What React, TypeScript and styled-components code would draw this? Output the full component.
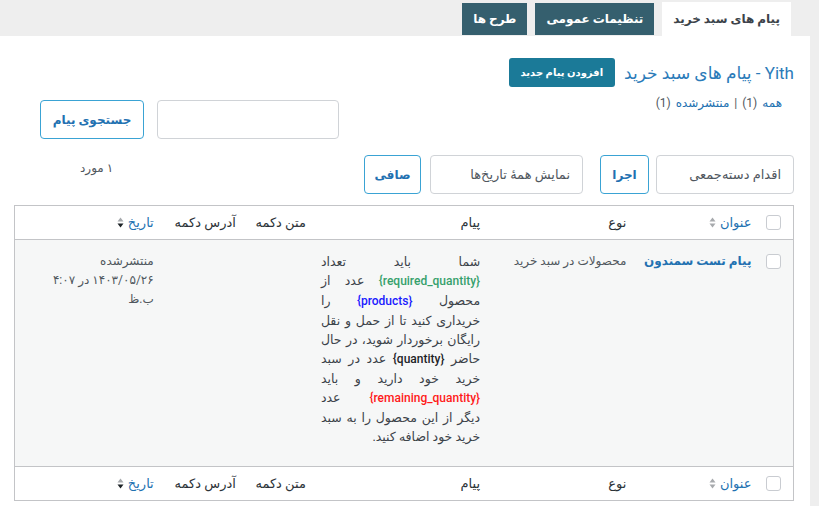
import React from 'react';
import styled, { createGlobalStyle } from 'styled-components';

const GlobalStyle = createGlobalStyle`
  html, body {
    margin: 0;
    padding: 0;
    background: #eeeeee;
  }
  body {
    font-family: Roboto, "DejaVu Sans", sans-serif;
    font-size: 13px;
    color: #3c434a;
  }
`;

const Page = styled.div`
  direction: rtl;
  width: 819px;
  height: 506px;
  overflow: hidden;
  background: #eeeeee;
`;

const TabBar = styled.div`
  display: flex;
  gap: 8px;
  height: 36px;
  padding: 2px 28px 0 0;
  box-sizing: border-box;
`;

const Tab = styled.div<{ $active?: boolean }>`
  display: flex;
  align-items: center;
  justify-content: center;
  height: ${p => (p.$active ? 34 : 32)}px;
  margin-top: ${p => (p.$active ? 0 : 1)}px;
  padding: 0 11px;
  box-sizing: border-box;
  font-size: 12px;
  font-weight: bold;
  background: ${p => (p.$active ? '#ffffff' : '#355f6e')};
  color: ${p => (p.$active ? '#3c434a' : '#ffffff')};
`;

const Panel = styled.div`
  background: #ffffff;
  margin-right: 9px;
  height: 470px;
  padding: 22px 16px 0 14px;
  box-sizing: border-box;
`;

const TitleRow = styled.div`
  display: flex;
  align-items: center;
  gap: 9px;
`;

const Title = styled.h1`
  margin: 0;
  font-size: 17px;
  font-weight: normal;
  color: #2b7bb9;
`;

const AddButton = styled.button`
  height: 29px;
  padding: 0 12px;
  border: none;
  border-radius: 3px;
  background: #1b7a98;
  color: #ffffff;
  font-family: inherit;
  font-size: 10px;
  font-weight: bold;
`;

const FilterRow = styled.div`
  display: flex;
  justify-content: space-between;
  align-items: flex-start;
  margin-top: 6px;
`;

const Views = styled.div`
  display: flex;
  align-items: center;
  gap: 5px;
  padding-right: 12px;
  padding-top: 3px;
  font-size: 12px;
  color: #50575e;
`;

const ViewLink = styled.a`
  color: #2271b1;
  text-decoration: none;
`;

const SearchBox = styled.div`
  display: flex;
  gap: 13px;
  margin-left: 26px;
  margin-top: 7px;
`;

const TextInput = styled.div`
  width: 182px;
  height: 39px;
  border: 1px solid #d0d3d7;
  border-radius: 4px;
  box-sizing: border-box;
`;

const OutlineButton = styled.button<{ $w: number }>`
  width: ${p => p.$w}px;
  height: 39px;
  border: 1px solid #3aa3d4;
  border-radius: 4px;
  background: #ffffff;
  color: #2271b1;
  font-family: inherit;
  font-size: 12px;
  font-weight: bold;
  box-sizing: border-box;
  padding: 0;
`;

const BulkRow = styled.div`
  display: flex;
  align-items: center;
  margin-top: 16px;
`;

const Select = styled.div<{ $w: number }>`
  display: flex;
  align-items: center;
  width: ${p => p.$w}px;
  height: 39px;
  padding: 0 12px 0 0;
  border: 1px solid #d0d3d7;
  border-radius: 4px;
  box-sizing: border-box;
  font-size: 13px;
  color: #50575e;
`;

const BulkGroup = styled.div<{ $gap: number; $start?: number }>`
  display: flex;
  gap: ${p => p.$gap}px;
  margin-right: ${p => p.$start || 0}px;
`;

const Count = styled.div`
  margin-right: auto;
  margin-left: 66px;
  align-self: flex-start;
  margin-top: 6px;
  font-size: 12px;
  color: #50575e;
`;

const Table = styled.table`
  margin-top: 11px;
  width: 780px;
  table-layout: fixed;
  border-collapse: collapse;
  border: 1px solid #c3c4c7;
`;

const Th = styled.th<{ $w: number }>`
  width: ${p => p.$w}px;
  box-sizing: border-box;
  height: 34px;
  padding: 0 8px;
  text-align: right;
  font-weight: normal;
  font-size: 13px;
  color: #2c3338;
  background: #ffffff;
  white-space: nowrap;
`;

const HeadRow = styled.tr<{ $foot?: boolean }>`
  border-${p => (p.$foot ? 'top' : 'bottom')}: 1px solid #c3c4c7;
`;

const BodyRow = styled.tr`
  background: #f6f7f7;
`;

const Td = styled.td`
  vertical-align: top;
  padding: 12px 8px;
  text-align: right;
  font-size: 12px;
  line-height: 19px;
  color: #50575e;
`;

const CheckCell = styled.td`
  vertical-align: top;
  padding: 14px 12px 0 0;
`;

const CheckTh = styled.th`
  width: 34px;
  box-sizing: border-box;
  padding: 0 12px 0 0;
  text-align: right;
  background: #ffffff;
`;

const Check = styled.span`
  display: block;
  width: 15px;
  height: 15px;
  border: 1px solid #c9ccd1;
  border-radius: 3px;
  background: #ffffff;
  box-sizing: border-box;
`;

const SortLink = styled.a`
  display: inline-flex;
  align-items: center;
  gap: 4px;
  color: #2271b1;
  text-decoration: none;
`;

const RowTitle = styled.a`
  font-weight: bold;
  font-size: 12px;
  color: #2271b1;
  text-decoration: none;
`;

const Message = styled(Td)`
  text-align: justify;
  text-align-last: right;
  padding: 12px 8px 20px 7px;
  font-size: 12.5px;
  color: #3c434a;
`;

const Token = styled.span<{ $c: string }>`
  color: ${p => p.$c};
  font-family: Roboto, sans-serif;
  font-size: 12px;
  font-weight: 500;
  unicode-bidi: isolate;
`;

const SortIcon = ({ desc }: { desc?: boolean }) => (
  <svg width="7" height="11" viewBox="0 0 7 11">
    <path d="M3.5 0.5 L6.5 4.5 L0.5 4.5 Z" fill="#a7aaad" />
    <path d="M3.5 10.5 L6.5 6.5 L0.5 6.5 Z" fill={desc ? '#1d2327' : '#a7aaad'} />
  </svg>
);

const widths = [125, 146, 174, 70, 82, 147];

const HeaderCells = ({ foot }: { foot?: boolean }) => (
  <HeadRow $foot={foot}>
    <CheckTh>
      <Check />
    </CheckTh>
    <Th $w={widths[0]}>
      <SortLink>
        عنوان <SortIcon />
      </SortLink>
    </Th>
    <Th $w={widths[1]}>نوع</Th>
    <Th $w={widths[2]}>پیام</Th>
    <Th $w={widths[3]}>متن دکمه</Th>
    <Th $w={widths[4]}>آدرس دکمه</Th>
    <Th $w={widths[5]}>
      <SortLink>
        تاریخ <SortIcon desc />
      </SortLink>
    </Th>
  </HeadRow>
);

export default function App() {
  return (
    <Page>
      <GlobalStyle />
      <TabBar>
        <Tab $active>پیام های سبد خرید</Tab>
        <Tab>تنظیمات عمومی</Tab>
        <Tab>طرح ها</Tab>
      </TabBar>
      <Panel>
        <TitleRow>
          <Title>Yith - پیام های سبد خرید</Title>
          <AddButton>افزودن پیام جدید</AddButton>
        </TitleRow>
        <FilterRow>
          <Views>
            <ViewLink>همه</ViewLink>
            <span>(1)</span>
            <span>|</span>
            <ViewLink>منتشرشده</ViewLink>
            <span>(1)</span>
          </Views>
          <SearchBox>
            <TextInput />
            <OutlineButton $w={104}>جستجوی پیام</OutlineButton>
          </SearchBox>
        </FilterRow>
        <BulkRow>
          <BulkGroup $gap={7}>
            <Select $w={138}>اقدام دسته‌جمعی</Select>
            <OutlineButton $w={49}>اجرا</OutlineButton>
          </BulkGroup>
          <BulkGroup $gap={9} $start={17}>
            <Select $w={153}>نمایش همهٔ تاریخ‌ها</Select>
            <OutlineButton $w={57}>صافی</OutlineButton>
          </BulkGroup>
          <Count>۱ مورد</Count>
        </BulkRow>
        <Table>
          <thead>
            <HeaderCells />
          </thead>
          <tbody>
            <BodyRow>
              <CheckCell>
                <Check />
              </CheckCell>
              <Td>
                <RowTitle>پیام تست سمندون</RowTitle>
              </Td>
              <Td>محصولات در سبد خرید</Td>
              <Message>
                شما باید تعداد <Token $c="#35a06c">{'{required_quantity}'}</Token> عدد از محصول{' '}
                <Token $c="#1a1aff">{'{products}'}</Token> را خریداری کنید تا از حمل و نقل رایگان
                برخوردار شوید، در حال حاضر <Token $c="#1d2327">{'{quantity}'}</Token> عدد در سبد خرید
                خود دارید و باید <Token $c="#ff1a1a">{'{remaining_quantity}'}</Token> عدد دیگر از این
                محصول را به سبد خرید خود اضافه کنید.
              </Message>
              <Td />
              <Td />
              <Td>
                منتشرشده
                <br />
                ۱۴۰۳/۰۵/۲۶ در ۴:۰۷
                <br />
                ب.ظ
              </Td>
            </BodyRow>
          </tbody>
          <tfoot>
            <HeaderCells foot />
          </tfoot>
        </Table>
      </Panel>
    </Page>
  );
}
